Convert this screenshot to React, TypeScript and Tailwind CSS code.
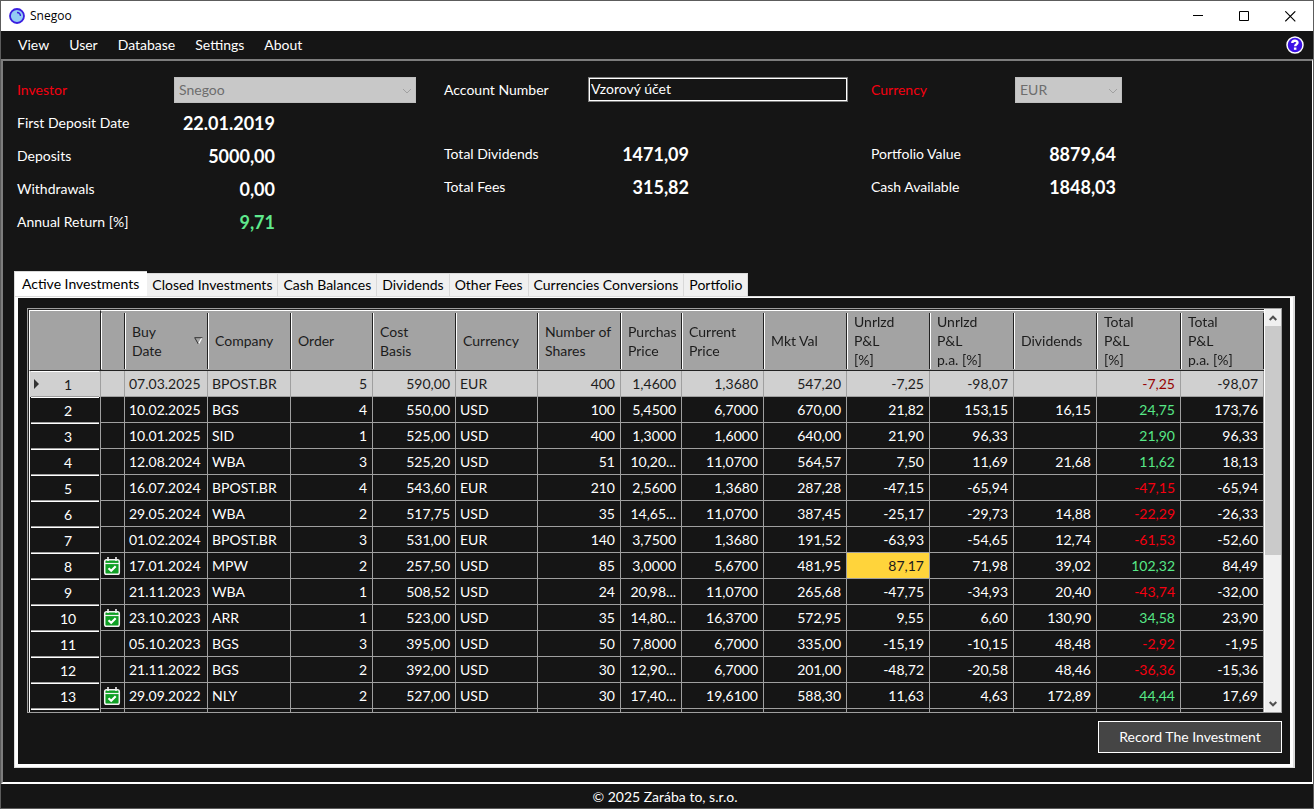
import type { ReactNode } from "react";
import clsx from "clsx";

interface Investment {
    date: string;
    company: string;
    order: string;
    cost: string;
    currency: string;
    shares: string;
    purchase: string;
    current: string;
    value: string;
    unrealized: string;
    unrealizedPa: string;
    dividends: string;
    total: string;
    totalPa: string;
    checked?: boolean;
    highlight?: boolean;
}

const rows: string[][] = [
    ["07.03.2025", "BPOST.BR", "5", "590,00", "EUR", "400", "1,4600", "1,3680", "547,20", "-7,25", "-98,07", "", "-7,25", "-98,07"],
    ["10.02.2025", "BGS", "4", "550,00", "USD", "100", "5,4500", "6,7000", "670,00", "21,82", "153,15", "16,15", "24,75", "173,76"],
    ["10.01.2025", "SID", "1", "525,00", "USD", "400", "1,3000", "1,6000", "640,00", "21,90", "96,33", "", "21,90", "96,33"],
    ["12.08.2024", "WBA", "3", "525,20", "USD", "51", "10,20...", "11,0700", "564,57", "7,50", "11,69", "21,68", "11,62", "18,13"],
    ["16.07.2024", "BPOST.BR", "4", "543,60", "EUR", "210", "2,5600", "1,3680", "287,28", "-47,15", "-65,94", "", "-47,15", "-65,94"],
    ["29.05.2024", "WBA", "2", "517,75", "USD", "35", "14,65...", "11,0700", "387,45", "-25,17", "-29,73", "14,88", "-22,29", "-26,33"],
    ["01.02.2024", "BPOST.BR", "3", "531,00", "EUR", "140", "3,7500", "1,3680", "191,52", "-63,93", "-54,65", "12,74", "-61,53", "-52,60"],
    ["17.01.2024", "MPW", "2", "257,50", "USD", "85", "3,0000", "5,6700", "481,95", "87,17", "71,98", "39,02", "102,32", "84,49"],
    ["21.11.2023", "WBA", "1", "508,52", "USD", "24", "20,98...", "11,0700", "265,68", "-47,75", "-34,93", "20,40", "-43,74", "-32,00"],
    ["23.10.2023", "ARR", "1", "523,00", "USD", "35", "14,80...", "16,3700", "572,95", "9,55", "6,60", "130,90", "34,58", "23,90"],
    ["05.10.2023", "BGS", "3", "395,00", "USD", "50", "7,8000", "6,7000", "335,00", "-15,19", "-10,15", "48,48", "-2,92", "-1,95"],
    ["21.11.2022", "BGS", "2", "392,00", "USD", "30", "12,90...", "6,7000", "201,00", "-48,72", "-20,58", "48,46", "-36,36", "-15,36"],
    ["29.09.2022", "NLY", "2", "527,00", "USD", "30", "17,40...", "19,6100", "588,30", "11,63", "4,63", "172,89", "44,44", "17,69"],
];

const checkedRows = [7, 9, 12];

const investments: Investment[] = rows.map((r, i) => ({
    date: r[0],
    company: r[1],
    order: r[2],
    cost: r[3],
    currency: r[4],
    shares: r[5],
    purchase: r[6],
    current: r[7],
    value: r[8],
    unrealized: r[9],
    unrealizedPa: r[10],
    dividends: r[11],
    total: r[12],
    totalPa: r[13],
    checked: checkedRows.includes(i),
    highlight: i === 7,
}));

const columns: { lines: string[]; width: number }[] = [
    { lines: ["Buy", "Date"], width: 83 },
    { lines: ["Company"], width: 83 },
    { lines: ["Order"], width: 82 },
    { lines: ["Cost", "Basis"], width: 83 },
    { lines: ["Currency"], width: 82 },
    { lines: ["Number of", "Shares"], width: 83 },
    { lines: ["Purchas", "Price"], width: 61 },
    { lines: ["Current", "Price"], width: 82 },
    { lines: ["Mkt Val"], width: 83 },
    { lines: ["Unrlzd", "P&L", "[%]"], width: 83 },
    { lines: ["Unrlzd", "P&L", "p.a. [%]"], width: 84 },
    { lines: ["Dividends"], width: 83 },
    { lines: ["Total", "P&L", "[%]"], width: 84 },
    { lines: ["Total", "P&L", "p.a. [%]"], width: 83 },
];

const tabs = ["Closed Investments", "Cash Balances", "Dividends", "Other Fees", "Currencies Conversions", "Portfolio"];

function Logo() {
    return (
        <svg width="16" height="16" viewBox="0 0 16 16" fill="none">
            <circle cx="8" cy="8" r="7" fill="#93cdf3" stroke="#3a1fe0" strokeWidth="1.8" />
            <path d="M8 4.5c2 .1 3.400 1.400 3.500 3.500" stroke="#3a1fe0" strokeWidth="1.4" />
        </svg>
    );
}

function CalendarCheck() {
    return (
        <svg className="block" width="18" height="20" viewBox="0 0 18 20" fill="none">
            <rect x="1.7" y="3.700" width="14.600" height="14.600" rx="1.800" fill="#0f9f24" stroke="#f2f2f2" strokeWidth="1.500" />
            <path d="M1.700 7.500h14.600" stroke="#f2f2f2" strokeWidth="1.200" />
            <path d="M5 1v4M13 1v4" stroke="#f2f2f2" strokeWidth="1.600" />
            <path d="M5.500 12.200l2.700 2.600 4.500-4.600" stroke="#fff" strokeWidth="2.200" />
        </svg>
    );
}

function Field({ label, children }: { label: string; children: ReactNode }) {
    return (
        <div className="flex h-[33px] items-center">
            <span className="w-36 shrink-0">{label}</span>
            {children}
        </div>
    );
}

function Amount({ children, className }: { children: ReactNode; className?: string }) {
    return (
        <span className={clsx("w-[101px] text-right text-lg font-bold", className)}>{children}</span>
    );
}

function Picker({ id, value, className }: { id: string; value: string; className: string }) {
    return (
        <div className={clsx("relative", className)}>
            <select
                id={id}
                disabled
                className="block h-[26px] w-full appearance-none border border-[#bfbfbf] bg-[#c8c8c8] px-1 text-[#6d6d6d]"
            >
                <option>{value}</option>
            </select>
            <svg className="pointer-events-none absolute top-2.5 right-1" width="10" height="8" viewBox="0 0 10 8" fill="none">
                <path d="M1 2l4 4 4-4" stroke="#a0a0a0" />
            </svg>
        </div>
    );
}

function Summary() {
    return (
        <section className="grid grid-cols-3 pt-3 pr-3.5 pb-[33px] pl-3.5">
            <div>
                <div className="flex h-[33px] items-center">
                    <label htmlFor="investor" className="w-[157px] shrink-0 text-[#f50010]">
                        Investor
                    </label>
                    <Picker id="investor" value="Snegoo" className="w-[242px]" />
                </div>
                {[
                    ["First Deposit Date", "22.01.2019"],
                    ["Deposits", "5000,00"],
                    ["Withdrawals", "0,00"],
                    ["Annual Return [%]", "9,71"],
                ].map(([label, value]) => (
                    <div key={label} className="flex h-[33px] items-center">
                        <span className="w-[157px] shrink-0">{label}</span>
                        <Amount className={clsx(label.startsWith("Annual") && "text-[#5fe98d]")}>{value}</Amount>
                    </div>
                ))}
            </div>

            <div>
                <div className="mb-[31px] flex h-[33px] items-center">
                    <label htmlFor="account" className="w-36 shrink-0">
                        Account Number
                    </label>
                    <div className="border border-[#7d7d7d]">
                        <input
                            id="account"
                            type="text"
                            defaultValue="Vzorový účet"
                            className="block h-[23px] w-[258px] border border-white bg-[#151515] px-px pb-0.5 outline-none"
                        />
                    </div>
                </div>
                <Field label="Total Dividends">
                    <Amount>1471,09</Amount>
                </Field>
                <Field label="Total Fees">
                    <Amount>315,82</Amount>
                </Field>
            </div>

            <div>
                <div className="mb-[31px] flex h-[33px] items-center">
                    <label htmlFor="currency" className="w-36 shrink-0 text-[#f50010]">
                        Currency
                    </label>
                    <Picker id="currency" value="EUR" className="w-[107px]" />
                </div>
                <Field label="Portfolio Value">
                    <Amount>8879,64</Amount>
                </Field>
                <Field label="Cash Available">
                    <Amount>1848,03</Amount>
                </Field>
            </div>
        </section>
    );
}

function Cell({ children, left, className }: { children?: ReactNode; left?: boolean; className?: string }) {
    return (
        <td
            className={clsx(
                "overflow-hidden border-r border-b border-[#9f9f9f] p-0 whitespace-nowrap",
                left ? "pl-1 text-left" : "pr-[5px] text-right",
                className,
            )}
        >
            {children}
        </td>
    );
}

function InvestmentRow({ item, index }: { item: Investment; index: number }) {
    const selected = index === 0;
    const loss = item.total.startsWith("-");

    return (
        <tr className={clsx("h-[26px]", selected ? "bg-[#d0d0d0] text-[#1c1c1c]" : "text-white")}>
            <th className="border-r border-l border-r-[#9f9f9f] border-l-white p-0 font-normal">
                <div className="mx-px flex h-[26px] items-center border-t border-b border-t-white border-b-[#9f9f9f]">
                    <span className="w-[29px] pl-0.5">
                        {selected && (
                            <svg width="7" height="10" viewBox="0 0 7 10">
                                <path d="M1 0l5 5-5 5z" fill="#333" />
                            </svg>
                        )}
                    </span>
                    <span className="w-4 pt-0.5 text-center">{index + 1}</span>
                </div>
            </th>
            <td className="border-r border-b border-[#9f9f9f] p-0 pl-0.5">{item.checked && <CalendarCheck />}</td>
            <Cell left>{item.date}</Cell>
            <Cell left>{item.company}</Cell>
            <Cell>{item.order}</Cell>
            <Cell>{item.cost}</Cell>
            <Cell left>{item.currency}</Cell>
            <Cell>{item.shares}</Cell>
            <Cell>{item.purchase}</Cell>
            <Cell>{item.current}</Cell>
            <Cell>{item.value}</Cell>
            <Cell className={clsx(item.highlight && "bg-[#ffd43b] text-[#1c1c1c]")}>{item.unrealized}</Cell>
            <Cell>{item.unrealizedPa}</Cell>
            <Cell>{item.dividends}</Cell>
            <Cell className={selected ? "text-[#960000]" : loss ? "text-[#f50010]" : "text-[#57e887]"}>{item.total}</Cell>
            <Cell>{item.totalPa}</Cell>
        </tr>
    );
}

function InvestmentTable() {
    return (
        <table className="w-full table-fixed border-separate border-spacing-0">
            <colgroup>
                <col style={{ width: 72 }} />
                <col style={{ width: 24 }} />
                {columns.map((c, i) => (
                    <col key={i} style={{ width: c.width }} />
                ))}
            </colgroup>
            <thead className="sticky top-0 bg-[#a3a3a3] text-[#1c1c1c]">
                <tr className="h-[61px]">
                    <th className="border-t border-r border-b border-l border-t-white border-r-[#222] border-b-[#222] border-l-white p-0" />
                    <th className="border-t border-b border-t-white border-b-[#222] p-0">
                        <div className="h-14 border-r border-l border-r-[#222] border-l-white" />
                    </th>
                    {columns.map((c, i) => (
                        <th key={i} className="border-t border-b border-t-white border-b-[#222] p-0 text-left font-normal">
                            <div className="flex h-14 items-center justify-between overflow-hidden border-r border-l border-r-[#222] border-l-white pr-1 pl-1.5 leading-[19px] whitespace-nowrap">
                                <span>
                                    {c.lines.map((line) => (
                                        <span key={line} className="block">
                                            {line}
                                        </span>
                                    ))}
                                </span>
                                {i === 0 && (
                                    <svg width="9" height="8" viewBox="0 0 9 8" fill="none">
                                        <path d="M8 .5L4.5 7" stroke="#fff" strokeWidth="1.3" />
                                        <path d="M8.5 .7H.7L4.3 7" stroke="#333" />
                                    </svg>
                                )}
                            </div>
                        </th>
                    ))}
                </tr>
            </thead>
            <tbody>
                {investments.map((item, i) => (
                    <InvestmentRow key={item.date} item={item} index={i} />
                ))}
                <tr className="h-[26px]">
                    <th className="border-r border-l border-r-[#9f9f9f] border-l-white p-0">
                        <div className="mx-px h-[26px] border-t border-white" />
                    </th>
                    {Array.from({ length: 15 }, (_, i) => (
                        <Cell key={i} />
                    ))}
                </tr>
            </tbody>
        </table>
    );
}

function ScrollBar() {
    return (
        <div className="flex w-[17px] shrink-0 flex-col border-l border-white bg-[#f0f0f0]">
            <button type="button" aria-label="Scroll up" className="flex h-[17px] items-center justify-center">
                <svg width="8" height="6" viewBox="0 0 8 6" fill="none">
                    <path d="M.7 5L4 1.7 7.3 5" stroke="#505050" strokeWidth="2" />
                </svg>
            </button>
            <div className="flex-1">
                <div className="h-[62%] bg-[#cacaca]" />
            </div>
            <button type="button" aria-label="Scroll down" className="flex h-[17px] items-center justify-center">
                <svg width="8" height="6" viewBox="0 0 8 6" fill="none">
                    <path d="M.7 1L4 4.3 7.3 1" stroke="#505050" strokeWidth="2" />
                </svg>
            </button>
        </div>
    );
}

export default function App() {
    return (
        <div className="flex h-screen flex-col border border-[#5c5c5c] bg-[#151515] font-[Lato,sans-serif] text-sm text-white">
            <header className="flex h-[30px] shrink-0 items-center bg-white pl-2 text-black">
                <Logo />
                <h1 className="flex-1 pl-[5px] font-['Open_Sans',sans-serif] text-xs">Snegoo</h1>
                <button type="button" aria-label="Minimize" className="flex h-full w-[46px] items-center justify-center">
                    <svg width="11" height="11" viewBox="0 0 11 11" fill="none">
                        <path d="M0 4.5h10" stroke="#000" />
                    </svg>
                </button>
                <button type="button" aria-label="Maximize" className="flex h-full w-[46px] items-center justify-center">
                    <svg width="11" height="11" viewBox="0 0 11 11" fill="none">
                        <path d="M.5.5h9v9h-9z" stroke="#000" />
                    </svg>
                </button>
                <button type="button" aria-label="Close" className="flex h-full w-[46px] items-center justify-center">
                    <svg width="11" height="11" viewBox="0 0 11 11" fill="none">
                        <path d="M.3.3l10 10M10.3.3l-10 10" stroke="#000" strokeWidth="1.1" />
                    </svg>
                </button>
            </header>

            <nav className="flex h-7 shrink-0 items-center gap-5 pr-2 pl-[17px]">
                {["View", "User", "Database", "Settings", "About"].map((item) => (
                    <button key={item} type="button">
                        {item}
                    </button>
                ))}
                <button type="button" aria-label="Help" className="ml-auto">
                    <svg className="block" width="20" height="20" viewBox="0 0 20 20">
                        <circle cx="10" cy="10" r="8" fill="#3c12e6" stroke="#fff" strokeWidth="1.5" />
                        <path d="M7.3 8c0-3 5.2-3 5.200-.3 0 1.700-2.300 1.700-2.300 3.600" fill="none" stroke="#fff" strokeWidth="2.4" />
                        <path d="M8.900 12.500h2.500v2.300H8.900z" fill="#fff" />
                    </svg>
                </button>
            </nav>

            <main className="flex min-h-0 flex-1 flex-col border-2 border-r border-t-[#7d7d7d] border-r-white border-b-white border-l-[#7d7d7d] pb-3.5">
                <Summary />

                <div className="mr-[17px] ml-[11px] flex items-end" role="tablist">
                    <button
                        type="button"
                        role="tab"
                        aria-selected="true"
                        className="h-[25px] border-t border-l border-[#d9d9d9] bg-white pr-2 pl-[7px] whitespace-nowrap text-black"
                    >
                        Active Investments
                    </button>
                    {tabs.map((tab) => (
                        <button
                            key={tab}
                            type="button"
                            role="tab"
                            aria-selected="false"
                            className="h-[23px] border-t border-r border-[#d9d9d9] bg-[#f0f0f0] px-[5px] whitespace-nowrap text-black"
                        >
                            {tab}
                        </button>
                    ))}
                </div>

                <div className="mr-[17px] ml-[11px] flex min-h-0 flex-1 flex-col border border-r-2 border-[#dcdcdc]">
                    <div className="flex min-h-0 flex-1 flex-col border-[3px] border-t border-white pt-2.5 pr-2 pb-[11px] pl-[9px]">
                        <div className="flex min-h-0 flex-1 border border-[#9f9f9f]">
                            <div className="min-w-0 flex-1 overflow-hidden border-t border-l border-[#222]">
                                <InvestmentTable />
                            </div>
                            <ScrollBar />
                        </div>
                        <button type="button" className="mt-2 h-8 w-[184px] shrink-0 self-end border border-white bg-[#454545]">
                            Record The Investment
                        </button>
                    </div>
                </div>
            </main>

            <footer className="flex h-6 shrink-0 items-center justify-center pt-px pl-4">© 2025 Zarába to, s.r.o.</footer>
        </div>
    );
}
